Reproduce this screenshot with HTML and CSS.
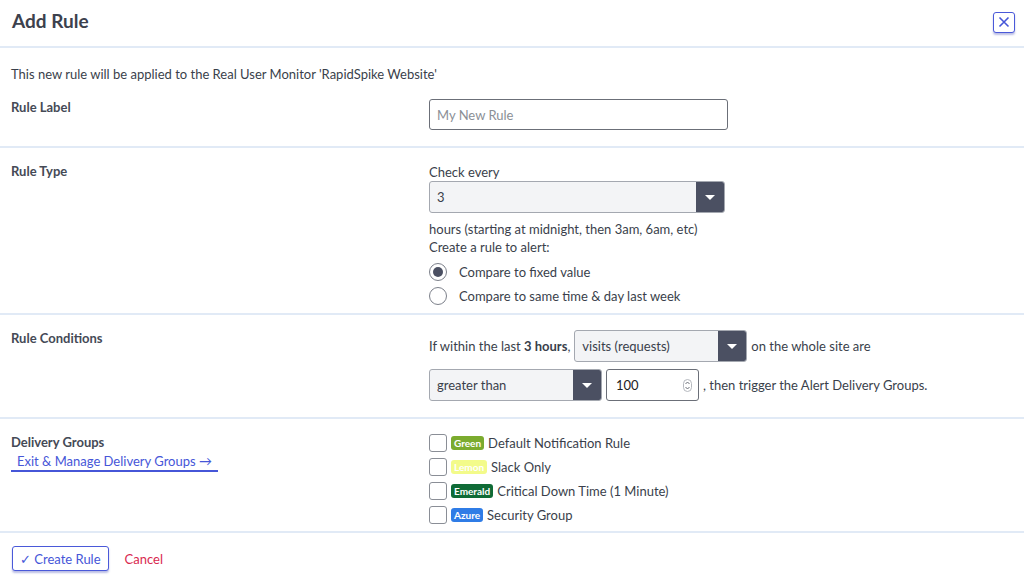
FILE: index.html
```html
<!DOCTYPE html>
<html lang="en">
<head>
  <meta charset="UTF-8">
  <title>Add Rule</title>
  <link rel="stylesheet" href="styles.css">
</head>
<body>
  <div class="modal">
    <div class="modal-header">
      <h2>Add Rule</h2>
      <button class="close-btn" aria-label="Close">
        <svg width="12" height="12" viewBox="0 0 12 12"><path d="M1.5 1.5 L10.5 10.5 M10.5 1.5 L1.5 10.5" stroke="#4656d8" stroke-width="1.6" fill="none"/></svg>
      </button>
    </div>

    <div class="section label-section">
      <p class="intro">This new rule will be applied to the Real User Monitor 'RapidSpike Website'</p>
      <div class="row">
        <div class="label">Rule Label</div>
        <div class="field">
          <input class="text-input" type="text" placeholder="My New Rule">
        </div>
      </div>
    </div>

    <div class="section type-section">
      <div class="row">
        <div class="label">Rule Type</div>
        <div class="field">
          <div class="line">Check every</div>
          <div class="select wide"><span>3</span><span class="caret"></span></div>
          <div class="line mt">hours (starting at midnight, then 3am, 6am, etc)</div>
          <div class="line">Create a rule to alert:</div>
          <div class="radios">
            <label class="radio"><span class="dot checked"></span>Compare to fixed value</label>
            <label class="radio"><span class="dot"></span>Compare to same time &amp; day last week</label>
          </div>
        </div>
      </div>
    </div>

    <div class="section cond-section">
      <div class="row">
        <div class="label">Rule Conditions</div>
        <div class="field">
          <div class="inline">
            <span>If within the last <b>3 hours</b>,</span>
            <div class="select mid"><span>visits (requests)</span><span class="caret"></span></div>
            <span>on the whole site are</span>
          </div>
          <div class="inline second">
            <div class="select mid"><span>greater than</span><span class="caret"></span></div>
            <div class="number">
              <span>100</span>
              <svg width="9" height="13" viewBox="0 0 9 13"><rect x="0.5" y="0.5" width="8" height="12" rx="4" fill="none" stroke="#b5b8be"/><path d="M2.5 5 L4.5 3 L6.5 5 M2.5 8 L4.5 10 L6.5 8" stroke="#6b6f78" stroke-width="1" fill="none"/></svg>
            </div>
            <span>, then trigger the Alert Delivery Groups.</span>
          </div>
        </div>
      </div>
    </div>

    <div class="section groups-section">
      <div class="row">
        <div class="label stack">
          <span>Delivery Groups</span>
          <a class="manage-link" href="#">Exit &amp; Manage Delivery Groups →</a>
        </div>
        <div class="field">
          <label class="check"><span class="box"></span><span class="tag green">Green</span>Default Notification Rule</label>
          <label class="check"><span class="box"></span><span class="tag lemon">Lemon</span>Slack Only</label>
          <label class="check"><span class="box"></span><span class="tag emerald">Emerald</span>Critical Down Time (1 Minute)</label>
          <label class="check"><span class="box"></span><span class="tag azure">Azure</span>Security Group</label>
        </div>
      </div>
    </div>

    <div class="modal-footer">
      <button class="create-btn">✓ Create Rule</button>
      <a class="cancel" href="#">Cancel</a>
    </div>
  </div>
</body>
</html>
```

FILE: styles.css
```css
body {
  margin: 0;
  font-family: Lato, "Noto Sans", sans-serif;
  font-size: 13px;
  color: #3a3f4b;
  background: #fff;
}
.modal {
  width: 1024px;
}
.modal-header {
  display: flex;
  align-items: center;
  justify-content: space-between;
  height: 46px;
  padding: 0 9px 0 12px;
  border-bottom: 2px solid #e1eaf6;
}
.modal-header h2 {
  margin: 0;
  font-size: 19px;
  font-weight: 700;
  color: #3c414d;
  padding-bottom: 6px;
}
.close-btn {
  width: 22px;
  height: 21px;
  padding: 0;
  display: flex;
  align-items: center;
  justify-content: center;
  background: #fff;
  border: 1px solid #4a59d9;
  border-radius: 3px;
  box-shadow: 0 2px 2px rgba(60, 70, 180, 0.35);
  margin-bottom: 2px;
}

/* sections */
.section {
  border-bottom: 2px solid #e1eaf6;
  padding: 15px 11px 16px;
}
.label-section {
  padding-top: 18px;
}
.type-section {
  padding-bottom: 5px;
}
.groups-section {
  padding-top: 12px;
  padding-bottom: 4px;
}
.intro {
  margin: 0 0 17px;
  line-height: 16px;
}
.row {
  display: flex;
}
.label {
  width: 418px;
  font-weight: 700;
  color: #454a56;
  line-height: 16px;
}
.label.stack {
  display: flex;
  flex-direction: column;
  align-items: flex-start;
  margin-top: 3px;
}
.field {
  flex: 1;
}

/* inputs */
.text-input {
  box-sizing: border-box;
  width: 299px;
  height: 31px;
  border: 1px solid #6b6f78;
  border-radius: 3px;
  padding: 0 7px;
  font-family: inherit;
  font-size: 13px;
  color: #3a3f4b;
}
.text-input::placeholder {
  color: #8b8f96;
}
.line {
  line-height: 18px;
}
.line.mt {
  margin-top: 7px;
}
.select {
  box-sizing: border-box;
  display: flex;
  align-items: center;
  justify-content: space-between;
  height: 32px;
  border: 1px solid #a4a8b0;
  border-radius: 3px;
  background: #f3f4f6;
  padding-left: 7px;
  overflow: hidden;
}
.select.wide {
  width: 296px;
}
.select.mid {
  width: 173px;
}
.caret {
  width: 28px;
  height: 100%;
  background: #4b5062;
  position: relative;
}
.caret::after {
  content: "";
  position: absolute;
  left: 9px;
  top: 13px;
  border-left: 5px solid transparent;
  border-right: 5px solid transparent;
  border-top: 5px solid #fff;
}
.radios {
  margin-top: 4px;
}
.radio {
  display: flex;
  align-items: center;
  height: 24px;
}
.dot {
  box-sizing: border-box;
  width: 18px;
  height: 18px;
  border: 1px solid #7c808a;
  border-radius: 50%;
  margin-right: 12px;
  position: relative;
}
.dot.checked::after {
  content: "";
  position: absolute;
  left: 3px;
  top: 3px;
  width: 10px;
  height: 10px;
  border-radius: 50%;
  background: #4b5062;
}
.inline {
  display: flex;
  align-items: center;
  gap: 4px;
}
.inline.second {
  margin-top: 7px;
}
.number {
  box-sizing: border-box;
  display: flex;
  align-items: center;
  justify-content: space-between;
  width: 93px;
  height: 32px;
  border: 1px solid #6b6f78;
  border-radius: 3px;
  padding: 0 6px 0 9px;
  color: #222;
}

/* delivery groups */
.check {
  display: flex;
  align-items: center;
  height: 24px;
}
.box {
  box-sizing: border-box;
  width: 18px;
  height: 18px;
  border: 1px solid #8a8e96;
  border-radius: 3px;
  margin-right: 4px;
}
.tag {
  font-size: 10px;
  font-weight: 700;
  color: #fff;
  border-radius: 3px;
  padding: 1px 3px;
  margin-right: 4px;
  line-height: 12px;
}
.tag.green { background: #7bab2e; }
.tag.lemon { background: #f3fb8a; }
.tag.emerald { background: #0f6b36; }
.tag.azure { background: #2f7ce6; }
.manage-link {
  margin-top: 3px;
  padding: 0 6px 1px;
  font-weight: 400;
  color: #4656d8;
  text-decoration: none;
  border-bottom: 2px solid #4656d8;
}

/* footer */
.modal-footer {
  display: flex;
  align-items: center;
  gap: 16px;
  padding: 13px 12px;
}
.create-btn {
  height: 25px;
  padding: 0 7px;
  font-family: inherit;
  font-size: 13px;
  color: #4656d8;
  background: #fff;
  border: 1px solid #4a59d9;
  border-radius: 3px;
  box-shadow: 0 2px 2px rgba(60, 70, 180, 0.35);
}
.cancel {
  color: #d9294f;
  text-decoration: none;
}
```
